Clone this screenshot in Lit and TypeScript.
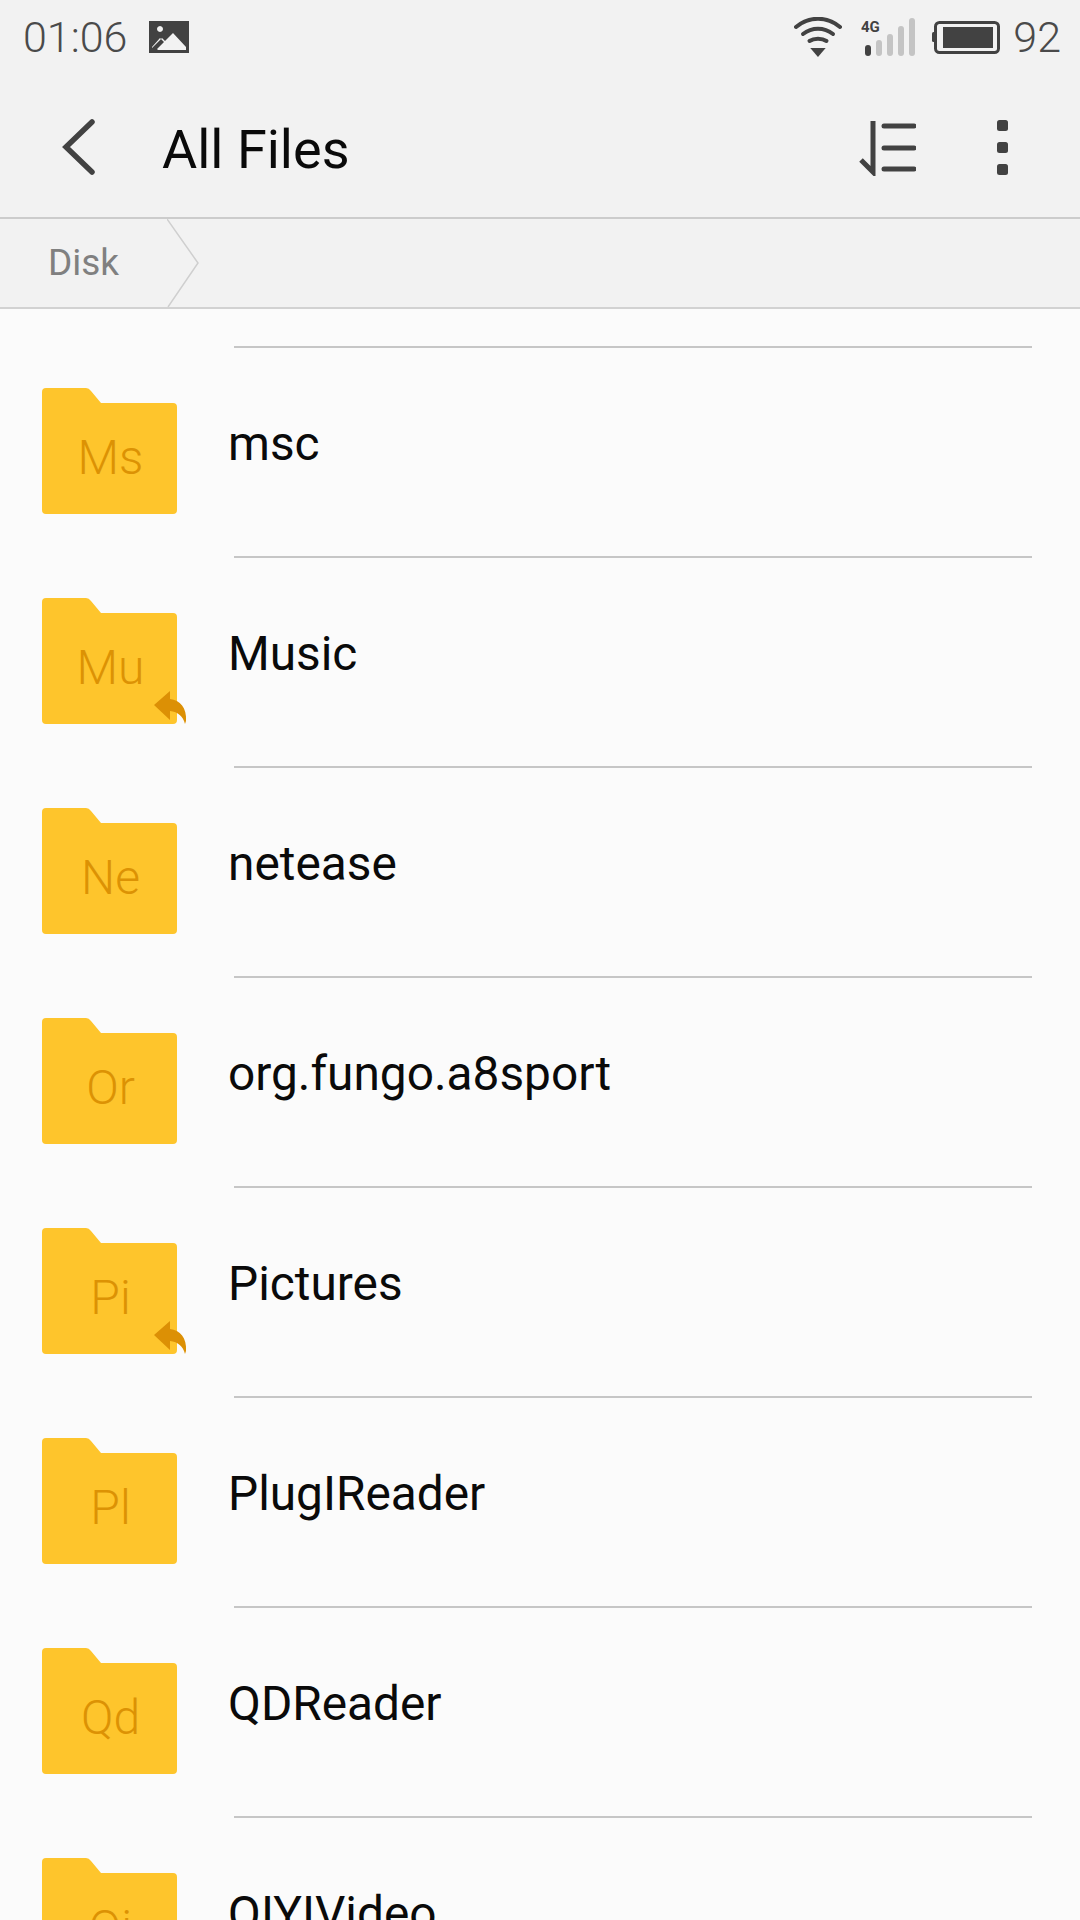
import { LitElement, html, css, svg } from 'lit';
import { customElement } from 'lit/decorators.js';

const FILES = [
  { name: 'msc', tag: 'Ms', link: false },
  { name: 'Music', tag: 'Mu', link: true },
  { name: 'netease', tag: 'Ne', link: false },
  { name: 'org.fungo.a8sport', tag: 'Or', link: false },
  { name: 'Pictures', tag: 'Pi', link: true },
  { name: 'PlugIReader', tag: 'Pl', link: false },
  { name: 'QDReader', tag: 'Qd', link: false },
  { name: 'QIYIVideo', tag: 'Qi', link: false },
];

const BARS = [
  { x: 0, h: 11, on: true },
  { x: 11, h: 16, on: false },
  { x: 22, h: 22, on: false },
  { x: 33, h: 30, on: false },
  { x: 44, h: 38, on: false },
];

@customElement('app-root')
export class AppRoot extends LitElement {
  static styles = css`
    :host {
      display: block;
      width: 1080px;
      height: 1920px;
      overflow: hidden;
      background: #fbfbfb;
      font-family: Roboto, sans-serif;
    }

    svg {
      display: block;
      flex: none;
    }

    .header {
      background: #f2f2f2;
    }

    .status {
      display: flex;
      align-items: center;
      height: 74px;
      padding: 0 19px 0 23px;
      color: #4a4a4a;
      font-size: 43px;
      line-height: 74px;
      font-weight: 300;
    }

    .status__time {
      margin-right: 22px;
    }

    .status__spacer {
      flex: 1;
    }

    .status__wifi {
      margin-right: 19px;
    }

    .status__signal {
      margin-right: 15px;
    }

    .status__battery {
      margin-right: 13px;
    }

    .toolbar {
      display: flex;
      align-items: center;
      height: 143px;
      padding-left: 60px;
      border-bottom: 2px solid #cccccc;
    }

    .toolbar__back {
      margin-top: 2px;
    }

    .toolbar__title {
      flex: 1;
      margin-left: 64px;
      margin-top: 7px;
      font-size: 54px;
      color: #0a0a0a;
    }

    .toolbar__sort {
      margin-top: 5px;
      margin-right: 81px;
    }

    .toolbar__more {
      margin-top: 4px;
      margin-right: 72px;
    }

    .crumbs {
      display: flex;
      align-items: center;
      height: 88px;
      background: #f2f2f2;
      border-bottom: 2px solid #d2d2d2;
    }

    .crumbs__label {
      width: 119px;
      padding-left: 48px;
      margin-top: -2px;
      font-size: 37px;
      color: #808080;
    }

    .list {
      padding-top: 37px;
    }

    .row {
      height: 208px;
      border-top: 2px solid #c6c6c6;
      margin-left: 234px;
      margin-right: 48px;
    }

    .row__body {
      display: flex;
      align-items: center;
      height: 208px;
      margin-left: -192px;
    }

    .folder {
      position: relative;
      flex: none;
      width: 135px;
      height: 126px;
      margin-top: -3px;
    }

    .folder__tag {
      position: absolute;
      left: 0;
      right: -2px;
      top: 40px;
      text-align: center;
      font-size: 48px;
      font-weight: 300;
      line-height: 60px;
      color: #dc9204;
    }

    .folder__link {
      position: absolute;
      left: 112px;
      top: 93px;
    }

    .row__name {
      margin-left: 51px;
      margin-top: -17px;
      font-size: 47.800px;
      color: #0a0a0a;
    }
  `;

  renderStatus() {
    return html`
      <div class="status">
        <span class="status__time">01:06</span>
        <svg width="40" height="32" viewBox="0 0 40 32">
          <path fill="#424242" fill-rule="evenodd" d="M0 0H40V32H0ZM3 3V26L11 17L15 21L8 28L9 29H37V26L24 12L16 20L13 17L3 27ZM11 5A3 3 0 1 0 11.01 5Z" />
        </svg>
        <span class="status__spacer"></span>
        <svg class="status__wifi" width="48" height="40" viewBox="0 0 48 40">
          <g fill="none" stroke="#424242" stroke-width="4" stroke-linecap="round">
            <path d="M2 10C15 -1 33 -1 46 10" />
            <path d="M9 17C18 10 30 10 39 17" />
            <path d="M15.500 24C20 21 28 21 32.500 24" />
          </g>
          <path fill="#424242" d="M14 31H34L24 40Z" transform="translate(5.500 0) scale(.77 1)" />
        </svg>
        <svg class="status__signal" width="56" height="40" viewBox="0 0 56 40">
          <text x="0" y="15" font-family="Roboto, sans-serif" font-size="15" font-weight="700" fill="#424242">4G</text>
          ${BARS.map(
            (b) => svg`<rect x=${b.x + 4} y=${39 - b.h} width="6" height=${b.h} rx="3" fill=${b.on ? '#424242' : '#c4c4c4'} />`
          )}
        </svg>
        <svg class="status__battery" width="68" height="33" viewBox="0 0 68 33">
          <rect x="0" y="11" width="4" height="10" rx="1.500" fill="#424242" />
          <rect x="3.500" y="1.500" width="63" height="30" rx="4" fill="none" stroke="#424242" stroke-width="3" />
          <rect x="11" y="6" width="50" height="21" fill="#424242" />
        </svg>
        <span>92</span>
      </div>
    `;
  }

  renderToolbar() {
    return html`
      <div class="toolbar">
        <svg class="toolbar__back" width="38" height="58" viewBox="0 0 38 58">
          <path d="M32 4L6 29L32 54" fill="none" stroke="#424242" stroke-width="5.500" stroke-linecap="round" stroke-linejoin="miter" />
        </svg>
        <span class="toolbar__title">All Files</span>
        <svg class="toolbar__sort" width="58" height="56" viewBox="0 0 58 56">
          <path d="M15 1V52L3 40" fill="none" stroke="#424242" stroke-width="5" />
          <g stroke="#424242" stroke-width="5" stroke-linecap="round">
            <path d="M26 6H56" />
            <path d="M26 28H56" />
            <path d="M26 49H56" />
          </g>
        </svg>
        <svg class="toolbar__more" width="11" height="55" viewBox="0 0 11 55">
          <rect width="11" height="11" rx="2.500" fill="#424242" />
          <rect y="22" width="11" height="11" rx="2.500" fill="#424242" />
          <rect y="44" width="11" height="11" rx="2.500" fill="#424242" />
        </svg>
      </div>
    `;
  }

  renderCrumbs() {
    return html`
      <div class="crumbs">
        <span class="crumbs__label">Disk</span>
        <svg width="40" height="88" viewBox="0 0 40 88">
          <path d="M0 0L31 44L1 88" fill="none" stroke="#cfcfcf" stroke-width="1.500" />
        </svg>
      </div>
    `;
  }

  renderFolder(tag: string, link: boolean) {
    return html`
      <div class="folder">
        <svg width="135" height="126" viewBox="0 0 135 126">
          <path
            fill="#fec52c"
            d="M4 0H44Q47 0 49 3L59 15H131Q135 15 135 19V122Q135 126 131 126H4Q0 126 0 122V4Q0 0 4 0Z"
          />
        </svg>
        <span class="folder__tag">${tag}</span>
        ${link
          ? html`<svg class="folder__link" width="33" height="34" viewBox="0 0 33 34">
              <path fill="#dc9005" d="M0 14L16 0V8C26 9 33 17 32 30L31 33C29 25 24 21 16 20V29Z" />
            </svg>`
          : ''}
      </div>
    `;
  }

  render() {
    return html`
      <div class="header">${this.renderStatus()} ${this.renderToolbar()}</div>
      ${this.renderCrumbs()}
      <div class="list">
        ${FILES.map(
          (f) => html`
            <div class="row">
              <div class="row__body">
                ${this.renderFolder(f.tag, f.link)}
                <span class="row__name">${f.name}</span>
              </div>
            </div>
          `
        )}
      </div>
    `;
  }
}
